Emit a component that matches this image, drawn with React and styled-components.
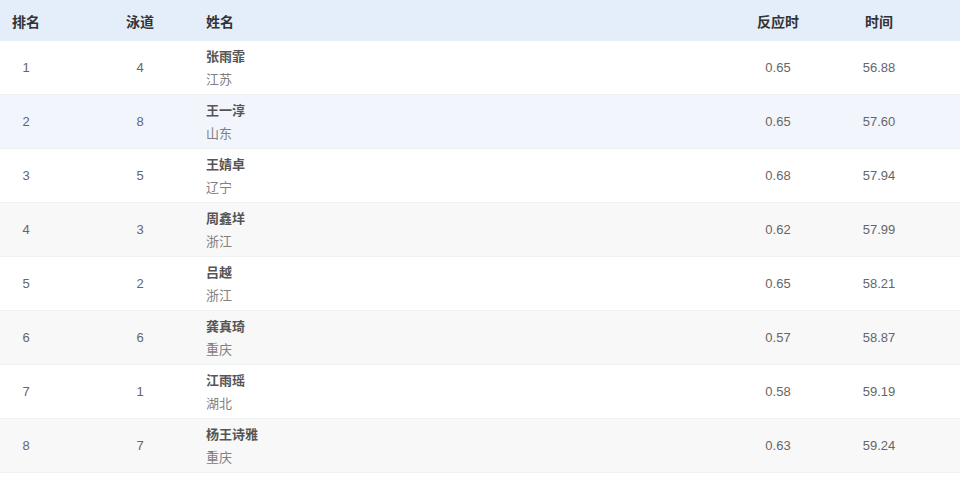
import React from "react";
import styled, { createGlobalStyle } from "styled-components";

const Global = createGlobalStyle`
  html, body { margin: 0; padding: 0; background: #fff; }
  body { font-family: "Liberation Sans", "Noto Sans CJK SC", Arial, sans-serif; }
`;

const Table = styled.div`
  width: 960px;
  display: flex;
  flex-direction: column;
`;

const Row = styled.div`
  display: grid;
  grid-template-columns: 52px 148px 1fr 100px 102px;
  padding-right: 30px;
  height: ${(p) => (p.$head ? "41px" : "53px")};
  align-items: center;
  background: ${(p) => p.$bg};
  border-bottom: ${(p) => (p.$head ? "none" : "1px solid #f0f1f3")};
`;

const HeadCell = styled.div`
  font-size: 14px;
  font-weight: bold;
  color: #333;
  text-align: ${(p) => (p.$left ? "left" : "center")};
  padding-left: ${(p) => p.$pl || 0}px;
`;

const Cell = styled.div`
  font-size: 13px;
  color: #666;
  text-align: center;
  padding-left: ${(p) => p.$pl || 0}px;
`;

const NameCell = styled.div`
  display: flex;
  flex-direction: column;
  padding-left: 6px;
`;

const Name = styled.div`
  font-size: 13px;
  font-weight: bold;
  color: #555;
  line-height: 23px;
`;

const Province = styled.div`
  font-size: 13px;
  color: #808080;
  line-height: 23px;
`;

const data = [
  [1, 4, "张雨霏", "江苏", "0.65", "56.88"],
  [2, 8, "王一淳", "山东", "0.65", "57.60"],
  [3, 5, "王婧卓", "辽宁", "0.68", "57.94"],
  [4, 3, "周鑫垟", "浙江", "0.62", "57.99"],
  [5, 2, "吕越", "浙江", "0.65", "58.21"],
  [6, 6, "龚真琦", "重庆", "0.57", "58.87"],
  [7, 1, "江雨瑶", "湖北", "0.58", "59.19"],
  [8, 7, "杨王诗雅", "重庆", "0.63", "59.24"],
];

const bgFor = (i) => (i === 1 ? "#f2f6fc" : i % 2 === 1 ? "#f8f8f8" : "#ffffff");

export default function App() {
  return (
    <>
      <Global />
      <Table>
        <Row $head $bg="#e4eefb">
          <HeadCell>排名</HeadCell>
          <HeadCell $pl={28}>泳道</HeadCell>
          <HeadCell $left $pl={6}>姓名</HeadCell>
          <HeadCell>反应时</HeadCell>
          <HeadCell>时间</HeadCell>
        </Row>
        {data.map((d, i) => (
          <Row key={d[0]} $bg={bgFor(i)}>
            <Cell>{d[0]}</Cell>
            <Cell $pl={28}>{d[1]}</Cell>
            <NameCell>
              <Name>{d[2]}</Name>
              <Province>{d[3]}</Province>
            </NameCell>
            <Cell>{d[4]}</Cell>
            <Cell>{d[5]}</Cell>
          </Row>
        ))}
      </Table>
    </>
  );
}
